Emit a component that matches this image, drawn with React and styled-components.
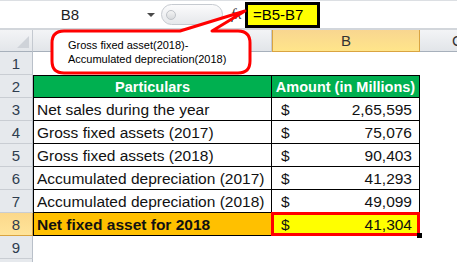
import React from "react";
import styled, { createGlobalStyle } from "styled-components";

const GlobalStyle = createGlobalStyle`
  html, body {
    margin: 0;
    padding: 0;
    background: #fff;
  }
  body {
    font-family: "Liberation Sans", Arial, sans-serif;
  }
`;

const Window = styled.div`
  position: relative;
  width: 457px;
  height: 262px;
  overflow: hidden;
  background: #fff;
`;

const FormulaBar = styled.div`
  display: flex;
  align-items: center;
  height: 30px;
  box-sizing: border-box;
  border-top: 1px solid #dcdfe3;
  border-bottom: 2px solid #d2d6db;
  background: #fff;
`;

const NameBox = styled.div`
  width: 140px;
  text-align: center;
  font-size: 15px;
  color: #1e1e1e;
`;

const DropArrow = styled.span`
  margin-left: 7px;
  width: 0;
  height: 0;
  border-left: 4px solid transparent;
  border-right: 4px solid transparent;
  border-top: 4px solid #4a4a4a;
`;

const Pill = styled.div`
  display: flex;
  align-items: center;
  margin-left: 6px;
  width: 62px;
  height: 21px;
  box-sizing: border-box;
  padding-left: 4px;
  border: 1px solid #c6cad0;
  border-radius: 11px;
  background: linear-gradient(#fbfbfc, #e6e8eb);
`;

const PillDot = styled.span`
  width: 8px;
  height: 8px;
  border-radius: 50%;
  border: 1px solid #bfc3c8;
  background: linear-gradient(#f4f4f4, #d8dadd);
`;

const FxLabel = styled.span`
  margin-left: 8px;
  width: 14px;
  font-family: "Liberation Serif", "Times New Roman", serif;
  font-style: italic;
  font-size: 15px;
  color: #333;
`;

const FormulaText = styled.div`
  display: flex;
  align-items: center;
  width: 75px;
  height: 26px;
  box-sizing: border-box;
  padding-left: 5px;
  border: 3px solid #000;
  background: #ffff00;
  font-size: 15px;
  color: #000;
`;

const Sheet = styled.div`
  display: grid;
  grid-template-columns: 33px 239px 148px 76px;
  grid-template-rows: 22px;
  grid-auto-rows: 23px;
`;

const Corner = styled.div`
  position: relative;
  box-sizing: border-box;
  background: linear-gradient(#f3f4f6, #e3e6ea);
  border-right: 1px solid #c4c9d0;
  border-bottom: 1px solid #a7b0bb;

  &::after {
    content: "";
    position: absolute;
    right: 3px;
    bottom: 3px;
    width: 0;
    height: 0;
    border-left: 12px solid transparent;
    border-bottom: 12px solid #cfd3d9;
  }
`;

const ColHead = styled.div`
  display: flex;
  align-items: center;
  justify-content: center;
  box-sizing: border-box;
  font-size: 15px;
  color: #333;
  background: ${(p) =>
    p.$selected
      ? "linear-gradient(#f8d690, #ffe58a)"
      : "linear-gradient(#f3f4f6, #e2e5e9)"};
  border-right: 1px solid ${(p) => (p.$selected ? "#d9a441" : "#c4c9d0")};
  border-bottom: 1px solid ${(p) => (p.$selected ? "#d9a441" : "#a7b0bb")};
  ${(p) => p.$selected && "border-left: 1px solid #d9a441;"}
`;

const RowHead = styled.div`
  display: flex;
  align-items: center;
  justify-content: center;
  box-sizing: border-box;
  padding-top: 1px;
  font-size: 15px;
  color: #2e3d4f;
  background: ${(p) =>
    p.$selected ? "linear-gradient(#fbd88b, #ffe49a)" : "#e6e9ed"};
  border-right: 1px solid ${(p) => (p.$selected ? "#d9a441" : "#b9c0c9")};
  border-bottom: 1px solid ${(p) => (p.$selected ? "#d9a441" : "#c9cdd3")};
`;

const fills = {
  head: "#00b050",
  total: "#ffc000",
  totalAmount: "#ffff00",
};

const Cell = styled.div`
  position: relative;
  display: flex;
  align-items: center;
  box-sizing: border-box;
  padding: 1px 3px 0;
  font-size: 15.5px;
  color: #111;
  white-space: nowrap;
  background: ${(p) => fills[p.$fill] || "#fff"};
  ${(p) =>
    p.$boxed &&
    `
    border-right: 1px solid #000;
    border-bottom: 1px solid #000;
  `}
  ${(p) => p.$boxed && p.$left && "border-left: 1px solid #000;"}
  ${(p) => p.$boxed && p.$top && "border-top: 1px solid #000;"}
  ${(p) =>
    p.$fill === "head" &&
    `
    justify-content: center;
    color: #fff;
    font-weight: bold;
    font-size: 14.5px;
  `}
  ${(p) => p.$fill === "total" && "font-weight: bold;"}
`;

const Amount = styled(Cell)`
  justify-content: space-between;
  padding: 1px 7px 0 9px;
`;

const ActiveFrame = styled.span`
  position: absolute;
  left: -1px;
  top: -1px;
  right: -1px;
  bottom: -1px;
  border: 3px solid #ff0000;
  pointer-events: none;
`;

const FillHandle = styled.span`
  position: absolute;
  right: -3px;
  bottom: -3px;
  width: 5px;
  height: 5px;
  background: #000;
  z-index: 2;
`;

const Callout = styled.div`
  position: absolute;
  left: 0;
  top: 0;
  width: 260px;
  height: 80px;
  pointer-events: none;
`;

const CalloutShape = styled.svg`
  display: block;
`;

const CalloutText = styled.div`
  position: absolute;
  left: 68px;
  top: 38px;
  font-size: 11px;
  line-height: 14px;
  color: #000;
  white-space: nowrap;
`;

const rows = [
  { n: 1 },
  { n: 2, head: true, a: "Particulars", b: "Amount (in Millions)" },
  { n: 3, a: "Net sales during the year", v: "2,65,595" },
  { n: 4, a: "Gross fixed assets (2017)", v: "75,076" },
  { n: 5, a: "Gross fixed assets (2018)", v: "90,403" },
  { n: 6, a: "Accumulated depreciation (2017)", v: "41,293" },
  { n: 7, a: "Accumulated depreciation (2018)", v: "49,099" },
  { n: 8, total: true, a: "Net fixed asset for 2018", v: "41,304" },
  { n: 9 },
  { n: 10 },
];

function SheetRow({ row }) {
  if (!row.a) {
    return (
      <>
        <RowHead>{row.n}</RowHead>
        <Cell />
        <Cell />
        <Cell />
      </>
    );
  }
  if (row.head) {
    return (
      <>
        <RowHead>{row.n}</RowHead>
        <Cell $boxed $left $top $fill="head">{row.a}</Cell>
        <Cell $boxed $top $fill="head">{row.b}</Cell>
        <Cell />
      </>
    );
  }
  return (
    <>
      <RowHead $selected={row.total}>{row.n}</RowHead>
      <Cell $boxed $left $fill={row.total ? "total" : undefined}>{row.a}</Cell>
      <Amount $boxed $fill={row.total ? "totalAmount" : undefined}>
        <span>$</span>
        <span>{row.v}</span>
        {row.total && <ActiveFrame />}
        {row.total && <FillHandle />}
      </Amount>
      <Cell />
    </>
  );
}

export default function App() {
  return (
    <Window>
      <GlobalStyle />
      <FormulaBar>
        <NameBox>B8</NameBox>
        <DropArrow />
        <Pill>
          <PillDot />
        </Pill>
        <FxLabel>fx</FxLabel>
        <FormulaText>=B5-B7</FormulaText>
      </FormulaBar>
      <Sheet>
        <Corner />
        <ColHead>A</ColHead>
        <ColHead $selected>B</ColHead>
        <ColHead>C</ColHead>
        {rows.map((row) => (
          <SheetRow key={row.n} row={row} />
        ))}
      </Sheet>
      <Callout>
        <CalloutShape width="260" height="80" viewBox="0 0 260 80">
          <path
            d="M64 31 L180 31 L245 11 L212 31 L238 31 Q250 31 250 43 L250 61 Q250 73 238 73 L64 73 Q52 73 52 61 L52 43 Q52 31 64 31 Z"
            fill="#fff"
            stroke="#ff0000"
            strokeWidth="3"
            strokeLinejoin="round"
          />
        </CalloutShape>
        <CalloutText>
          Gross fixed asset(2018)-
          <br />
          Accumulated depreciation(2018)
        </CalloutText>
      </Callout>
    </Window>
  );
}
